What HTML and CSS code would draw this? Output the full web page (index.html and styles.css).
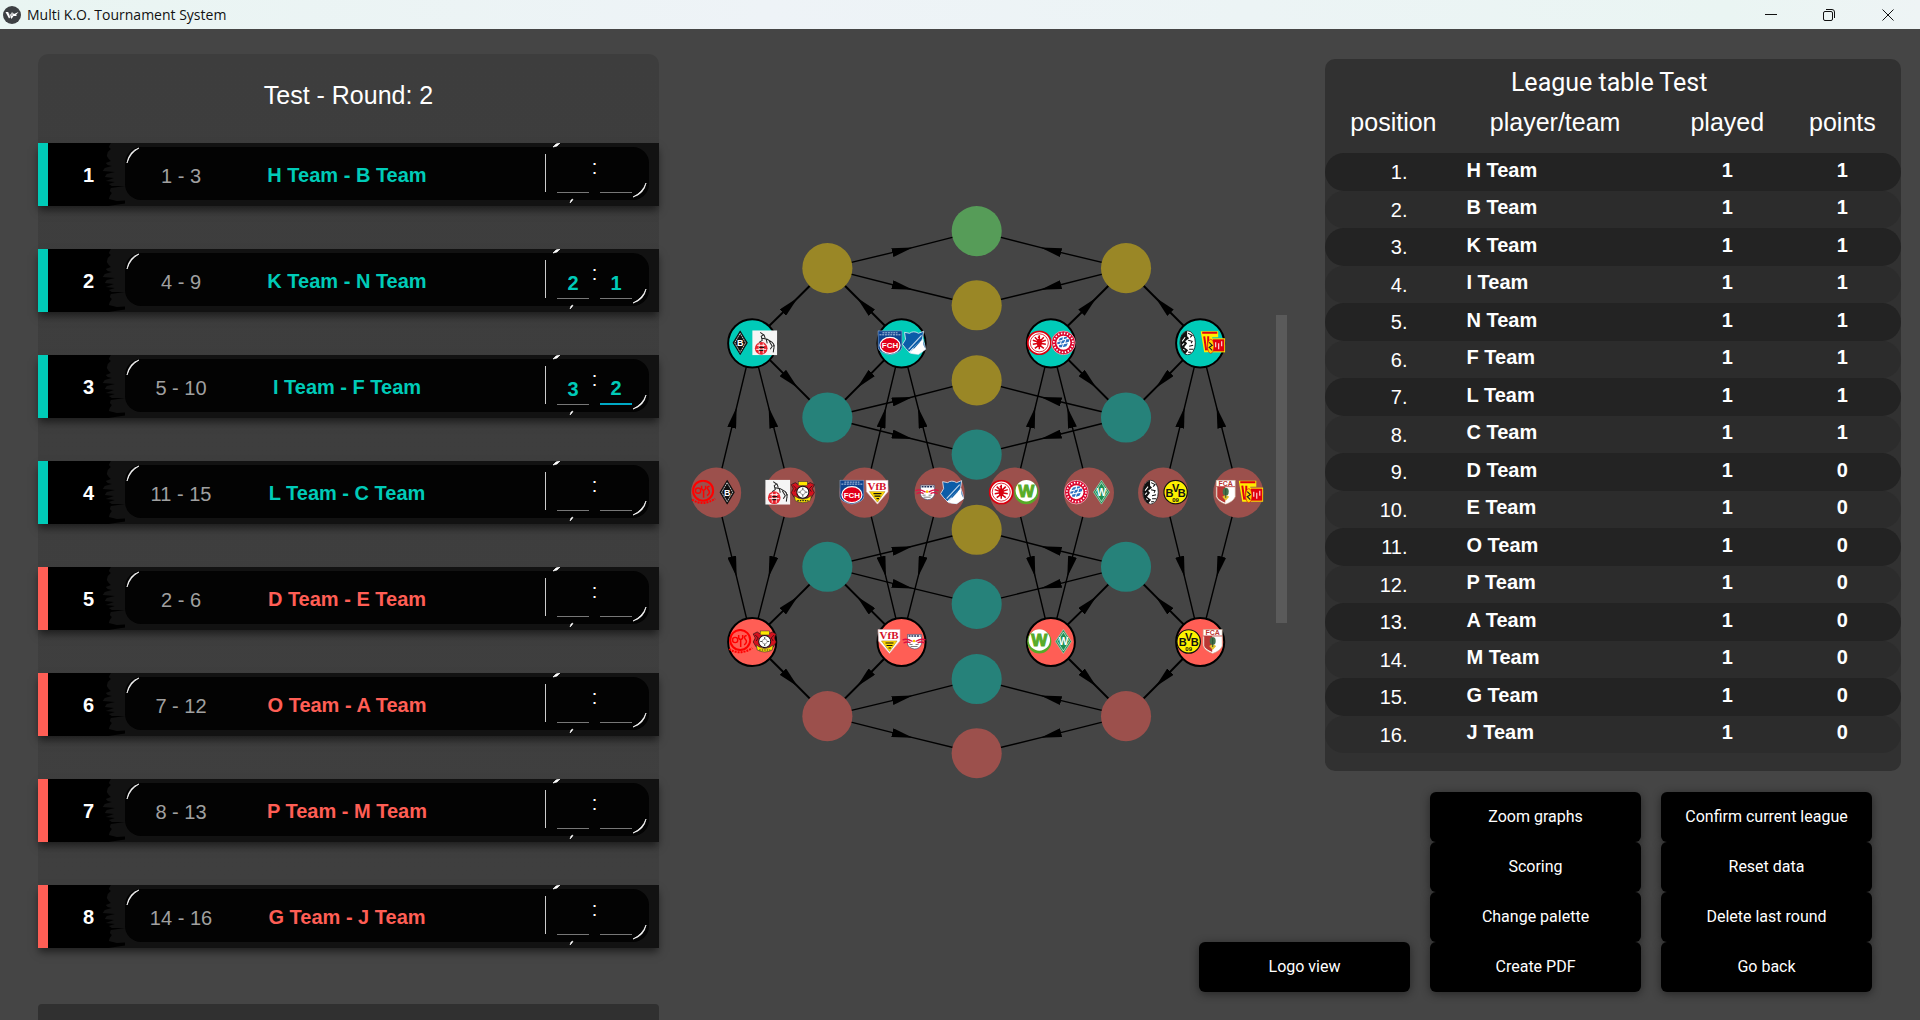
FILE: index.html
```html
<!DOCTYPE html>
<html lang="en">
<head>
<meta charset="utf-8">
<title>Multi K.O. Tournament System</title>
<link rel="stylesheet" href="styles.css">
</head>
<body>
<svg class="defs" aria-hidden="true">
  <defs>
    <marker id="arrow" viewBox="0 0 20 8" refX="10" refY="4" markerWidth="21" markerHeight="9" markerUnits="userSpaceOnUse" preserveAspectRatio="none" orient="auto"><path d="M0 0L20 4L0 8z"/></marker>
    <symbol id="brush" viewBox="0 0 76 63" preserveAspectRatio="none">
      <path d="M0 0H62L60 4L62 6L59 9L58 13L60 16L62 18L57 20L59 22L63 23L56 25L54 28L66 29L58 31L56 34L65 35L57 38L66 39L60 41L63 43L76 43L62 45L61 48L63 50L61 53L60 56L68 58L88 57L80 60L66 62L60 63H0z"/>
    </symbol>
    <symbol id="glint-left" viewBox="0 0 16 24"><path d="M2 20Q4 8 14 5Q5 10 2 20z" fill="#fff" stroke="#fff" stroke-width=".7"/></symbol>
    <symbol id="glint-right" viewBox="0 0 111 63">
      <path d="M5 4L9 3L12 0L8 1z" fill="#fff" stroke="#fff" stroke-width=".7"/>
      <path d="M22 60L23 57L25 56L24 58z" fill="#fff" stroke="#fff" stroke-width=".6"/>
      <path d="M98 40Q96 51 85 54Q95 49 98 40z" fill="#fff" stroke="#fff" stroke-width=".7"/>
    </symbol>

    <symbol id="mainz" viewBox="0 0 25 25">
      <circle cx="12" cy="11" r="10" fill="none" stroke="#f00" stroke-width="2"/>
      <circle cx="7" cy="11" r="2.600" fill="none" stroke="#f00" stroke-width="1.400"/>
      <path d="M10.500 6V9Q12.500 12 14.500 9V6M12.500 10V18M18.500 6.500Q15 7 17 10Q20 13 16 16" fill="none" stroke="#f00" stroke-width="1.500"/>
      <path d="M1 20Q12 27 24 19" fill="none" stroke="#f00" stroke-width="2" stroke-dasharray="2 1"/>
    </symbol>
    <symbol id="gladbach" viewBox="0 0 25 25">
      <path d="M13 1L20 12.500L13 24L6 12.500z" fill="#111" stroke="#111"/>
      <path d="M13 3L18.500 12.500L13 22L7.500 12.500z" fill="none" stroke="#ddd" stroke-width=".9" stroke-dasharray="1.500 .6"/>
      <text x="13" y="16" class="crest" font-size="9" fill="#fff">B</text>
    </symbol>
    <symbol id="koeln" viewBox="0 0 25 25">
      <rect width="25" height="25" fill="#f5f5f5"/>
      <circle cx="9" cy="18" r="6.300" fill="#e8232d"/>
      <path d="M5 15H13M4 19H14M7 13V23M11 13V23" stroke="#fff" stroke-width=".9"/>
      <path d="M7 17H12M7 20H11" stroke="#111" stroke-width="1.200"/>
      <path d="M7 12L10 10L9 6L12 4M8 2L12 5L13 8M10 8L15 9L20 12L22 15L21 22M17 11L20 16L18 19M14 9L15 13M21 13L22 18" fill="none" stroke="#222" stroke-width="1"/>
    </symbol>
    <symbol id="leverkusen" viewBox="0 0 25 25">
      <path d="M1 5L5 3L8 5H16L20 3L24 5L22 9L24 13L21 18H4L1 13L3 9z" fill="#d5121e" stroke="#111" stroke-width=".6"/>
      <path d="M3 6L6 9L4 12M22 6L19 9L21 12" fill="none" stroke="#111" stroke-width=".7"/>
      <rect x="8" y="2" width="9" height="4" fill="#ffe600" stroke="#333" stroke-width=".5"/>
      <path d="M4 16Q12.500 23 21 16L20 21Q12.500 25 5 21z" fill="#ffe600" stroke="#333" stroke-width=".6"/>
      <path d="M7 21H18" stroke="#222" stroke-width="1.200" stroke-dasharray="1.500 1"/>
      <circle cx="12.500" cy="12.500" r="6" fill="#fff" stroke="#111"/>
      <path d="M12.500 8V17M8 12.500H17" stroke="#333" stroke-width=".9"/>
      <circle cx="12.500" cy="12.500" r="2.400" fill="#fff" stroke="#555" stroke-width=".5"/>
    </symbol>
    <symbol id="heidenheim" viewBox="0 0 25 25">
      <path d="M.5.500H24.500V17Q24 22 12.500 24.500Q1 22 .5 17z" fill="#0d4390" stroke="#9fb3cf" stroke-width=".7"/>
      <path d="M5 2.500H20M2 4.500H23" stroke="#dfe7f2" stroke-width=".8" stroke-dasharray="2 .7"/>
      <ellipse cx="12.500" cy="15" rx="10" ry="8" fill="#e2001a" stroke="#fff" stroke-width="1.200"/>
      <text x="12.500" y="18" class="crest" font-size="8" fill="#fff">FCH</text>
    </symbol>
    <symbol id="stuttgart" viewBox="0 0 25 25">
      <path d="M1.500.500H23.500V12L13 24.500L2 12z" fill="#fff" stroke="#d9a6ab" stroke-width=".6"/>
      <text x="12.500" y="10" class="crest blackletter" font-size="11" fill="#d5102a">VfB</text>
      <path d="M5 12H20.500L13 22.500z" fill="#ffdd00" stroke="#b58a1c" stroke-width=".6"/>
      <path d="M9 14H17M10 16.500H16M12 19H14.500" stroke="#111" stroke-width="1.100"/>
    </symbol>
    <symbol id="leipzig" viewBox="0 0 25 25">
      <path d="M6 5.500H20V15Q18 20 13 20Q7 19 6 15z" fill="#fff" stroke="#33446b" stroke-width=".6"/>
      <path d="M7 7H19" stroke="#1c2f5a" stroke-width="1.500" stroke-dasharray="2 .8"/>
      <path d="M1 11Q5 9 11 12.500M2 14Q6 12 9 14M24 11Q20 9 14 12.500M23 14Q19 12 16 14" fill="none" stroke="#dd1144" stroke-width="1.300"/>
      <circle cx="12.500" cy="12" r="1.300" fill="#f7c600"/>
      <path d="M9 17.500H16M8 15.500H11M14 15.500H17" stroke="#444" stroke-width=".7" fill="none"/>
    </symbol>
    <symbol id="hoffenheim" viewBox="0 0 25 25">
      <path d="M3 2L8 3Q12 0 17 3L22 1L21 8L23 14L24 19L17 24L9 23L4 18L1 14L4 9z" fill="#0a5ca8" stroke="#e6eef7" stroke-width=".8"/>
      <path d="M21 8L7 22L12 23.500L17 24L24 19L22 15z" fill="#fff"/>
      <path d="M20 5L7 19M18 12L9 21" stroke="#bcd3ea" stroke-width="1.200"/>
      <path d="M20 9L12 18" stroke="#0a5ca8" stroke-width="1"/>
    </symbol>
    <symbol id="frankfurt" viewBox="0 0 25 25">
      <circle cx="12.500" cy="12.500" r="11.500" fill="#fff" stroke="#d9000f" stroke-width="1.800"/>
      <circle cx="12.500" cy="12.500" r="9" fill="none" stroke="#d9000f" stroke-width=".8"/>
      <path d="M12.500 5V19M11 7H13M12 11L8 7M13 11L17 7M12 12L6 10M13 12L19 10M12 13L6 14M13 13L19 14M12 15L8 18M13 15L17 18" fill="none" stroke="#d9000f" stroke-width="1.500"/>
      <ellipse cx="12.500" cy="12.500" rx="2.500" ry="4" fill="#d9000f"/>
    </symbol>
    <symbol id="wolfsburg" viewBox="0 0 25 25">
      <circle cx="12.500" cy="12.500" r="12" fill="#57ab27"/>
      <circle cx="12.500" cy="11" r="10.700" fill="#fff"/>
      <text x="12.500" y="17" class="crest heavy" font-size="17" fill="#57ab27" stroke="#57ab27">W</text>
    </symbol>
    <symbol id="bayern" viewBox="0 0 25 25">
      <circle cx="12.500" cy="12.500" r="11.800" fill="#dc052d" stroke="#f0b7c3" stroke-width=".8"/>
      <circle cx="12.500" cy="12.500" r="9.500" fill="none" stroke="#fff" stroke-width="1.800" stroke-dasharray="1.400 1.600"/>
      <circle cx="12.500" cy="12.500" r="7" fill="#fff"/>
      <path d="M6.500 12L10 11L9 13.500L6.500 14zM11 10.500L14.500 9.500L13 12.500L10 13.500zM15.500 9L18.500 9L18 11.500L14.500 12.500zM9 8L12 7L11.500 9.500L7.500 10.500zM8 15L12 14L11 17L8.500 17zM13 14L17 13L15.500 16L12 17zM13 7L16 6.500L16 8L13 9z" fill="#2a6fc0"/>
    </symbol>
    <symbol id="bremen" viewBox="0 0 25 25">
      <path d="M12.500.500L20.500 12.500L12.500 24.500L4.500 12.500z" fill="#1d9053" stroke="#b8ddc8" stroke-width=".6"/>
      <path d="M12.500 3L18.500 12.500L12.500 22L6.500 12.500z" fill="none" stroke="#fff" stroke-width=".6"/>
      <text x="12.500" y="16" class="crest" font-size="10" fill="#fff">W</text>
    </symbol>
    <symbol id="freiburg" viewBox="0 0 25 25">
      <ellipse cx="12.500" cy="12.500" rx="7.700" ry="12" fill="#fff" stroke="#111" stroke-width=".8"/>
      <path d="M12 .5Q5 3 5 12Q5 20 10 24L13 20L9 17L12 13L10 11L14 8L12 6z" fill="#111"/>
      <path d="M13 3L17 5L15 7M13 10L17 11L16 13M14 16L18 15M14 19H18M13 22H16" stroke="#111" stroke-width="1" fill="none"/>
      <path d="M7 11L10 7M7 15L9 13M8 19L10 20" stroke="#fff"/>
    </symbol>
    <symbol id="dortmund" viewBox="0 0 25 25">
      <circle cx="12.500" cy="12.500" r="11.700" fill="#fdf100" stroke="#111" stroke-width="1.200"/>
      <text x="6.500" y="17" class="crest" font-size="11" fill="#111">B</text>
      <text x="12.500" y="12" class="crest" font-size="11" fill="#111">V</text>
      <text x="18.500" y="17" class="crest" font-size="11" fill="#111">B</text>
      <text x="12.500" y="22" class="crest" font-size="6" fill="#111">09</text>
    </symbol>
    <symbol id="augsburg" viewBox="0 0 25 25">
      <path d="M3 .5H22V17Q20 22 12.500 24.500Q5 22 3 17z" fill="#fff" stroke="#c9a58c" stroke-width=".6"/>
      <path d="M4 7H12V23Q5 20 4 17z" fill="#ba3733"/>
      <text x="12.500" y="6" class="crest" font-size="7" fill="#ba3733">FCA</text>
      <path d="M3 7H22" stroke="#ba3733" stroke-width=".8"/>
      <ellipse cx="12.500" cy="12" rx="3" ry="4" fill="#46714d"/>
      <path d="M9 17Q12.500 14 16 17L12.500 21z" fill="#e2c22c"/>
      <path d="M12.500 9V18" stroke="#2b5234"/>
    </symbol>
    <symbol id="union" viewBox="0 0 25 25">
      <path d="M.5 1H18V7H12V22H4z" fill="#ffec00"/>
      <path d="M2 2.500H17M4 6L6 20M8 6V20" stroke="#e1000f" stroke-width="2"/>
      <rect x="12" y="8.500" width="12.500" height="13" fill="#e1000f" stroke="#ffec00"/>
      <path d="M15.500 12V17M18.500 13V19M21.500 11V16" fill="none" stroke="#fff" stroke-width="1"/>
      <ellipse cx="10.500" cy="16" rx="3.200" ry="7" fill="#ffd400" stroke="#e1000f" stroke-width=".6"/>
      <path d="M9 12L12 15L9 17L12 20" fill="none" stroke="#222" stroke-width="1.200"/>
    </symbol>

    <g id="feed-up"><path d="M716 492L734 417L752 342"/><path d="M790 492L771 417L752 342"/></g>
    <g id="feed-down"><path d="M716 492L734 566L752 641"/><path d="M790 492L771 566L752 641"/></g>
    <g id="diamond"><path d="M752 342L790 305L827 268"/><path d="M752 342L790 380L827 417"/><path d="M901 342L864 305L827 268"/><path d="M901 342L864 380L827 417"/></g>
    <g id="final"><path d="M827 268L902 250L976 231"/><path d="M827 268L902 287L976 305"/><path d="M1125 268L1050 250L976 231"/><path d="M1125 268L1050 287L976 305"/></g>
  </defs>
</svg>

<header class="titlebar">
  <svg class="app-icon" viewBox="0 0 18 18" aria-hidden="true"><circle cx="9" cy="9" r="9" fill="#3d4043"/><path d="M2.500 6H5.500L7 9L9 6L11 8L15.500 6L13 9L14 10L10.500 10L8.500 13L7.500 11L6 12.500z" fill="#fff"/><path d="M5.500 6L7.500 11M9 6L9 10" stroke="#3d4043" stroke-width=".6"/></svg>
  <h1 class="app-name">Multi K.O. Tournament System</h1>
  <div class="window-buttons">
    <button type="button" aria-label="Minimize"><svg viewBox="0 0 12 12"><path d="M0 5.500H12"/></svg></button>
    <button type="button" aria-label="Restore"><svg viewBox="0 0 12 12"><rect x=".5" y="2.500" width="9" height="9" rx="1.500"/><path d="M3 .5H9Q11.500.500 11.500 3V9"/></svg></button>
    <button type="button" aria-label="Close"><svg viewBox="0 0 12 12"><path d="M.5.500L11.500 11.500M11.500.500L.5 11.500"/></svg></button>
  </div>
</header>

<main class="app">
  <div class="rounds">
    <section class="round">
      <h2 class="round-title">Test - Round: 2</h2>
      <ol class="matches">
        <li class="match upper">
          <div class="match-no"><svg><use href="#brush"/></svg><span>1</span></div>
          <div class="match-box"><span class="seeds">1 - 3</span><span class="teams">H Team - B Team</span><span class="divider"></span>
            <div class="score"><input type="text" aria-label="H Team score"><span>:</span><input type="text" aria-label="B Team score"></div></div>
          <svg class="glint-left"><use href="#glint-left"/></svg><svg class="glint-right"><use href="#glint-right"/></svg>
        </li>
        <li class="match upper">
          <div class="match-no"><svg><use href="#brush"/></svg><span>2</span></div>
          <div class="match-box"><span class="seeds">4 - 9</span><span class="teams">K Team - N Team</span><span class="divider"></span>
            <div class="score"><input type="text" value="2" aria-label="K Team score"><span>:</span><input type="text" value="1" aria-label="N Team score"></div></div>
          <svg class="glint-left"><use href="#glint-left"/></svg><svg class="glint-right"><use href="#glint-right"/></svg>
        </li>
        <li class="match upper">
          <div class="match-no"><svg><use href="#brush"/></svg><span>3</span></div>
          <div class="match-box"><span class="seeds">5 - 10</span><span class="teams">I Team - F Team</span><span class="divider"></span>
            <div class="score"><input type="text" value="3" aria-label="I Team score"><span>:</span><input class="active" type="text" value="2" aria-label="F Team score"></div></div>
          <svg class="glint-left"><use href="#glint-left"/></svg><svg class="glint-right"><use href="#glint-right"/></svg>
        </li>
        <li class="match upper">
          <div class="match-no"><svg><use href="#brush"/></svg><span>4</span></div>
          <div class="match-box"><span class="seeds">11 - 15</span><span class="teams">L Team - C Team</span><span class="divider"></span>
            <div class="score"><input type="text" aria-label="L Team score"><span>:</span><input type="text" aria-label="C Team score"></div></div>
          <svg class="glint-left"><use href="#glint-left"/></svg><svg class="glint-right"><use href="#glint-right"/></svg>
        </li>
        <li class="match lower">
          <div class="match-no"><svg><use href="#brush"/></svg><span>5</span></div>
          <div class="match-box"><span class="seeds">2 - 6</span><span class="teams">D Team - E Team</span><span class="divider"></span>
            <div class="score"><input type="text" aria-label="D Team score"><span>:</span><input type="text" aria-label="E Team score"></div></div>
          <svg class="glint-left"><use href="#glint-left"/></svg><svg class="glint-right"><use href="#glint-right"/></svg>
        </li>
        <li class="match lower">
          <div class="match-no"><svg><use href="#brush"/></svg><span>6</span></div>
          <div class="match-box"><span class="seeds">7 - 12</span><span class="teams">O Team - A Team</span><span class="divider"></span>
            <div class="score"><input type="text" aria-label="O Team score"><span>:</span><input type="text" aria-label="A Team score"></div></div>
          <svg class="glint-left"><use href="#glint-left"/></svg><svg class="glint-right"><use href="#glint-right"/></svg>
        </li>
        <li class="match lower">
          <div class="match-no"><svg><use href="#brush"/></svg><span>7</span></div>
          <div class="match-box"><span class="seeds">8 - 13</span><span class="teams">P Team - M Team</span><span class="divider"></span>
            <div class="score"><input type="text" aria-label="P Team score"><span>:</span><input type="text" aria-label="M Team score"></div></div>
          <svg class="glint-left"><use href="#glint-left"/></svg><svg class="glint-right"><use href="#glint-right"/></svg>
        </li>
        <li class="match lower">
          <div class="match-no"><svg><use href="#brush"/></svg><span>8</span></div>
          <div class="match-box"><span class="seeds">14 - 16</span><span class="teams">G Team - J Team</span><span class="divider"></span>
            <div class="score"><input type="text" aria-label="G Team score"><span>:</span><input type="text" aria-label="J Team score"></div></div>
          <svg class="glint-left"><use href="#glint-left"/></svg><svg class="glint-right"><use href="#glint-right"/></svg>
        </li>
      </ol>
    </section>
    <section class="round previous"></section>
  </div>

  <div class="overview">
    <div class="graph">
      <svg class="bracket" viewBox="659 190 616 588" role="img" aria-label="Tournament bracket">
        <g class="edges">
          <use href="#feed-up"/><use href="#feed-up" x="149"/><use href="#feed-up" x="298"/><use href="#feed-up" x="447"/>
          <use href="#feed-down"/><use href="#feed-down" x="149"/><use href="#feed-down" x="298"/><use href="#feed-down" x="447"/>
          <use href="#final"/><use href="#final" y="149"/><use href="#final" y="298"/><use href="#final" y="447"/>
          <g class="thick"><use href="#diamond"/><use href="#diamond" x="298"/><use href="#diamond" y="298"/><use href="#diamond" x="298" y="298"/></g>
        </g>
        <g class="nodes red-dim">
          <circle cx="716" cy="492" r="25"/><circle cx="790" cy="492" r="25"/><circle cx="864" cy="492" r="25"/><circle cx="939" cy="492" r="25"/>
          <circle cx="1014" cy="492" r="25"/><circle cx="1088" cy="492" r="25"/><circle cx="1162" cy="492" r="25"/><circle cx="1237" cy="492" r="25"/>
          <circle cx="827" cy="715" r="25"/><circle cx="1125" cy="715" r="25"/><circle cx="976" cy="752" r="25"/>
        </g>
        <g class="nodes gold"><circle cx="827" cy="268" r="25"/><circle cx="1125" cy="268" r="25"/><circle cx="976" cy="305" r="25"/><circle cx="976" cy="380" r="25"/><circle cx="976" cy="529" r="25"/></g>
        <g class="nodes teal-dim"><circle cx="827" cy="417" r="25"/><circle cx="1125" cy="417" r="25"/><circle cx="827" cy="566" r="25"/><circle cx="1125" cy="566" r="25"/><circle cx="976" cy="454" r="25"/><circle cx="976" cy="603" r="25"/><circle cx="976" cy="678" r="25"/></g>
        <circle class="green" cx="976" cy="231" r="25"/>
        <g class="nodes teal"><circle cx="752" cy="343" r="24"/><circle cx="901" cy="343" r="24"/><circle cx="1050" cy="343" r="24"/><circle cx="1199" cy="343" r="24"/></g>
        <g class="nodes red"><circle cx="752" cy="641" r="24"/><circle cx="901" cy="641" r="24"/><circle cx="1050" cy="641" r="24"/><circle cx="1199" cy="641" r="24"/></g>
        <g class="crests">
          <use href="#mainz" x="691" y="479" width="25" height="25"/><use href="#gladbach" x="714" y="479" width="25" height="25"/>
          <use href="#koeln" x="765" y="479" width="25" height="25"/><use href="#leverkusen" x="790" y="479" width="25" height="25"/>
          <use href="#heidenheim" x="839" y="479" width="25" height="25"/><use href="#stuttgart" x="864" y="479" width="25" height="25"/>
          <use href="#leipzig" x="914" y="479" width="25" height="25"/><use href="#hoffenheim" x="939" y="479" width="25" height="25"/>
          <use href="#frankfurt" x="988" y="479" width="25" height="25"/><use href="#wolfsburg" x="1013" y="479" width="25" height="25"/>
          <use href="#bayern" x="1063" y="479" width="25" height="25"/><use href="#bremen" x="1088" y="479" width="25" height="25"/>
          <use href="#freiburg" x="1137" y="479" width="25" height="25"/><use href="#dortmund" x="1162" y="479" width="25" height="25"/>
          <use href="#augsburg" x="1212" y="479" width="25" height="25"/><use href="#union" x="1237" y="479" width="25" height="25"/>
          <use href="#gladbach" x="727" y="330" width="25" height="25"/><use href="#koeln" x="752" y="330" width="25" height="25"/>
          <use href="#heidenheim" x="877" y="330" width="25" height="25"/><use href="#hoffenheim" x="901" y="330" width="25" height="25"/>
          <use href="#frankfurt" x="1026" y="330" width="25" height="25"/><use href="#bayern" x="1050" y="330" width="25" height="25"/>
          <use href="#freiburg" x="1174" y="330" width="25" height="25"/><use href="#union" x="1199" y="330" width="25" height="25"/>
          <use href="#mainz" x="728" y="628" width="25" height="25"/><use href="#leverkusen" x="752" y="628" width="25" height="25"/>
          <use href="#stuttgart" x="876" y="628" width="25" height="25"/><use href="#leipzig" x="901" y="628" width="25" height="25"/>
          <use href="#wolfsburg" x="1026" y="628" width="25" height="25"/><use href="#bremen" x="1050" y="628" width="25" height="25"/>
          <use href="#dortmund" x="1175" y="628" width="25" height="25"/><use href="#augsburg" x="1199" y="628" width="25" height="25"/>
        </g>
      </svg>
      <div class="scroll-thumb"></div>
    </div>

    <section class="league">
      <table>
        <caption>League table Test</caption>
        <colgroup><col class="c-pos"><col class="c-team"><col class="c-num"><col class="c-num"></colgroup>
        <thead><tr><th scope="col">position</th><th scope="col" class="team-head">player/team</th><th scope="col">played</th><th scope="col">points</th></tr></thead>
        <tbody>
          <tr><td>1.</td><td>H Team</td><td>1</td><td>1</td></tr>
          <tr><td>2.</td><td>B Team</td><td>1</td><td>1</td></tr>
          <tr><td>3.</td><td>K Team</td><td>1</td><td>1</td></tr>
          <tr><td>4.</td><td>I Team</td><td>1</td><td>1</td></tr>
          <tr><td>5.</td><td>N Team</td><td>1</td><td>1</td></tr>
          <tr><td>6.</td><td>F Team</td><td>1</td><td>1</td></tr>
          <tr><td>7.</td><td>L Team</td><td>1</td><td>1</td></tr>
          <tr><td>8.</td><td>C Team</td><td>1</td><td>1</td></tr>
          <tr><td>9.</td><td>D Team</td><td>1</td><td>0</td></tr>
          <tr><td>10.</td><td>E Team</td><td>1</td><td>0</td></tr>
          <tr><td>11.</td><td>O Team</td><td>1</td><td>0</td></tr>
          <tr><td>12.</td><td>P Team</td><td>1</td><td>0</td></tr>
          <tr><td>13.</td><td>A Team</td><td>1</td><td>0</td></tr>
          <tr><td>14.</td><td>M Team</td><td>1</td><td>0</td></tr>
          <tr><td>15.</td><td>G Team</td><td>1</td><td>0</td></tr>
          <tr><td>16.</td><td>J Team</td><td>1</td><td>0</td></tr>
        </tbody>
      </table>
    </section>

    <div class="controls">
      <div class="control-col"><button type="button">Logo view</button></div>
      <div class="control-col"><button type="button">Zoom graphs</button><button type="button">Scoring</button><button type="button">Change palette</button><button type="button">Create PDF</button></div>
      <div class="control-col"><button type="button">Confirm current league</button><button type="button">Reset data</button><button type="button">Delete last round</button><button type="button">Go back</button></div>
    </div>
  </div>
</main>
</body>
</html>
```
FILE: styles.css
```css
:root {
  --teal: #00cbb8;
  --red: #ff5e55;
  --sans: "Liberation Sans", Arial, sans-serif;
}

* { box-sizing: border-box; }

body {
  margin: 0;
  height: 100vh;
  display: flex;
  flex-direction: column;
  overflow: hidden;
  background: #454545;
  color: #fff;
  font: 20px/24px var(--sans);
}

button, input { font: inherit; color: inherit; border: 0; padding: 0; margin: 0; }

.defs { position: absolute; width: 0; height: 0; }

/* Window title bar */
.titlebar {
  flex: none;
  height: 29px;
  padding-left: 3px;
  display: flex;
  align-items: center;
  gap: 6px;
  background: linear-gradient(90deg, #e9f5f2, #eef3f7 40%, #eaf5f3 90%, #eef4f5);
  color: #111;
}
.app-icon { width: 18px; height: 18px; }
.app-name { flex: 1; margin: 0; font: 14px/20px "Open Sans", "Noto Sans", sans-serif; }
.window-buttons { display: flex; padding-right: 2px; }
.window-buttons button { width: 58px; height: 28px; background: none; display: grid; place-items: center; }
.window-buttons button:last-child { width: 60px; }
.window-buttons svg { width: 12px; height: 12px; fill: none; stroke: #111; }

/* Page columns */
.app {
  flex: 1;
  min-height: 0;
  display: grid;
  grid-template-columns: 1fr 2fr;
  padding: 0 19px 0 38px;
  overflow: hidden;
}

/* Rounds list */
.rounds { padding-top: 25px; }
.round {
  border-radius: 10px 10px 0 0;
  background: linear-gradient(#3d3d3d, #3f3f3f) no-repeat 0 0 / 100% calc(100% - 63px);
}
.round-title {
  margin: 0;
  padding: 26px 0 33px;
  text-align: center;
  font: 25px/30px var(--sans);
}
.matches { list-style: none; margin: 0; padding: 0; display: grid; gap: 43px; }
.match {
  position: relative;
  display: flex;
  height: 63px;
  border-left: 10px solid var(--accent);
  background: #121212;
  box-shadow: 0 5px 8px -1px rgba(0, 0, 0, .55);
}
.upper { --accent: var(--teal); }
.lower { --accent: var(--red); }
.match-no { flex: none; width: 77px; display: grid; font-weight: bold; }
.match-no > * { grid-area: 1 / 1; }
.match-no svg { width: 100%; height: 100%; }
.match-no span { align-self: center; justify-self: center; padding-left: 4px; }
.match-box {
  flex: 1;
  display: flex;
  margin: 4px 10px 6px 0;
  border-radius: 16px;
  background: #030303;
}
.seeds { width: 112px; padding-top: 17px; text-align: center; color: #a0a0a0; }
.teams { flex: 1; padding: 16px 88px 0 0; text-align: center; font-weight: bold; color: var(--accent); }
.divider { width: 1px; height: 38px; margin-top: 7px; background: #ccc; }
.score { display: flex; margin: 0 17px 0 11px; }
.score span { width: 11px; padding-top: 8px; text-align: center; }
.score input {
  width: 32px;
  height: 46px;
  padding-top: 15px;
  background: none;
  border-bottom: 1px solid #777;
  color: var(--accent);
  font-weight: bold;
  text-align: center;
}
.score .active { border-bottom: 2px solid #00a9c6; }
.glint-left, .glint-right { position: absolute; top: 0; pointer-events: none; }
.glint-left { left: 77px; width: 16px; height: 24px; }
.glint-right { right: 0; width: 111px; height: 63px; }
.previous { height: 63px; margin-top: 56px; border-radius: 4px 4px 0 0; background: #303030; }

/* Bracket and league table */
.overview {
  display: grid;
  grid-template-columns: 15fr 13fr;
  grid-template-rows: auto 1fr;
  align-items: start;
}
.graph { display: flex; align-items: flex-start; padding: 161px 37px 0 0; }
.bracket { flex: 1; min-width: 0; }
.scroll-thumb { width: 11px; height: 308px; margin-top: 125px; background: #5a5a5a; }
.edges { fill: none; stroke: #000; stroke-width: 1.4px; }
#feed-up path, #feed-down path, #diamond path, #final path { marker-mid: url(#arrow); }
.thick { stroke-width: 2px; }
#arrow path { fill: #000; stroke: none; }
.gold { fill: #9a8726; }
.green { fill: #569c58; }
.teal-dim { fill: #26827a; }
.red-dim { fill: #9c504c; }
.teal, .red { stroke: #000; stroke-width: 2px; }
.teal { fill: var(--teal); }
.red { fill: var(--red); }
.crest { font-family: "Liberation Sans", Arial, sans-serif; font-weight: bold; text-anchor: middle; stroke: none; }
.crest.blackletter { font-family: "Liberation Serif", serif; }
.crest.heavy { stroke: #57ab27; stroke-width: 1px; }

.league { margin: 30px 0 0 1px; padding-bottom: 18px; border-radius: 10px; background: #313131; }
.league table { width: 100%; height: 650px; table-layout: fixed; border-collapse: separate; border-spacing: 0; }
.league caption { height: 44px; padding: 7px 8px 0 0; font: 25px/34px Roboto, sans-serif; }
.c-pos { width: 24%; }
.c-team { width: 36%; }
.c-num { width: 20%; }
.league th { height: 50px; padding: 0 2px 12px 0; font: 25px/30px var(--sans); }
.league .team-head { padding-right: 24px; }
.league td { height: 37px; padding: 0 2px 4px 0; text-align: center; font-weight: bold; }
.league td:first-child { padding: 1px 56px 0 0; text-align: right; font-weight: normal; border-radius: 19px 0 0 19px; }
.league td:nth-child(2) { padding-left: 3px; text-align: left; }
.league td:last-child { border-radius: 0 19px 19px 0; }
.league tbody tr:nth-child(odd) td { background: #232323; }
.league tbody tr:nth-child(even) td { background: #2c2c2c; }

/* Action buttons */
.controls {
  grid-column: 1 / -1;
  display: flex;
  justify-content: flex-end;
  gap: 20px;
  padding: 13px 29px 0 0;
}
.control-col { width: 211px; display: flex; flex-direction: column; justify-content: flex-end; }
.control-col button {
  height: 50px;
  border-radius: 6px;
  background: #000;
  box-shadow: 0 2px 10px rgba(0, 0, 0, .45);
  font: 16px/20px Roboto, sans-serif;
}
```
